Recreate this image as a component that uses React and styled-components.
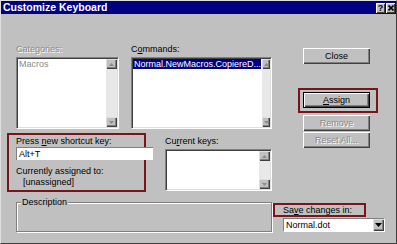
import styled, { createGlobalStyle } from "styled-components";

const GlobalStyle = createGlobalStyle`
    html, body {
        margin: 0;
        padding: 0;
        overflow: hidden;
        background: #c0c0c0;
    }
    body {
        font-family: "Liberation Sans", Arial, sans-serif;
        font-size: 9px;
    }
`;

const ScrollBar = () => (
    <ScrollTrack>
        <ScrollArrow>
            <svg width="5" height="3" viewBox="0 0 5 3">
                <polygon points="2.5,0 5,3 0,3" fill="#8a8a8a" />
            </svg>
        </ScrollArrow>
        <ScrollArrow>
            <svg width="5" height="3" viewBox="0 0 5 3">
                <polygon points="0,0 5,0 2.5,3" fill="#8a8a8a" />
            </svg>
        </ScrollArrow>
    </ScrollTrack>
);

const App = () => {
    return (
        <>
            <GlobalStyle />
            <Window>
                <TitleBar>
                    <TitleText>Customize Keyboard</TitleText>
                    <TitleButtons>
                        <TitleButton>?</TitleButton>
                        <TitleButton>
                            <svg width="6" height="6" viewBox="0 0 6 6">
                                <path d="M0.5 0.5 L5.5 5.5 M5.5 0.5 L0.5 5.5" stroke="#000" strokeWidth="1.6" />
                            </svg>
                        </TitleButton>
                    </TitleButtons>
                </TitleBar>
                <Body>
                    <TopArea>
                        <LeftPane>
                            <ListsRow>
                                <Field>
                                    <Label $disabled>Categories:</Label>
                                    <ListBox $height={72}>
                                        <ListItems>
                                            <Item $disabled>Macros</Item>
                                        </ListItems>
                                        <ScrollBar />
                                    </ListBox>
                                </Field>
                                <Field>
                                    <Label>
                                        C<u>o</u>mmands:
                                    </Label>
                                    <ListBox $height={72}>
                                        <ListItems>
                                            <Item $selected>Normal.NewMacros.CopiereD...</Item>
                                        </ListItems>
                                        <ScrollBar />
                                    </ListBox>
                                </Field>
                            </ListsRow>
                            <KeysRow>
                                <ShortcutFrame>
                                    <Label>
                                        Press <u>n</u>ew shortcut key:
                                    </Label>
                                    <KeyInput>Alt+T</KeyInput>
                                    <AssignedLabel>Currently assigned to:</AssignedLabel>
                                    <AssignedValue>[unassigned]</AssignedValue>
                                </ShortcutFrame>
                                <CurrentKeys>
                                    <Label>
                                        Cu<u>r</u>rent keys:
                                    </Label>
                                    <ListBox $height={42}>
                                        <ListItems />
                                        <ScrollBar />
                                    </ListBox>
                                </CurrentKeys>
                            </KeysRow>
                        </LeftPane>
                        <ButtonColumn>
                            <Button>Close</Button>
                            <AssignFrame>
                                <Button $default>
                                    <u>A</u>ssign
                                </Button>
                            </AssignFrame>
                            <Button $disabled>Remove</Button>
                            <Button $disabled $gap={1}>
                                Reset All...
                            </Button>
                        </ButtonColumn>
                    </TopArea>
                    <BottomArea>
                        <GroupBox>
                            <GroupLegend>Description</GroupLegend>
                        </GroupBox>
                        <SaveBlock>
                            <SaveFrame>
                                Sa<u>v</u>e changes in:
                            </SaveFrame>
                            <Dropdown>
                                <DropdownValue>Normal.dot</DropdownValue>
                                <DropdownButton>
                                    <svg width="7" height="4" viewBox="0 0 7 4">
                                        <polygon points="0,0 7,0 3.5,4" fill="#000" />
                                    </svg>
                                </DropdownButton>
                            </Dropdown>
                        </SaveBlock>
                    </BottomArea>
                </Body>
            </Window>
        </>
    );
};

const Window = styled.div`
    width: 397px;
    height: 244px;
    box-sizing: border-box;
    background: #c0c0c0;
    border-top: 1px solid #dfdfdf;
    border-left: 1px solid #dfdfdf;
    border-right: 1px solid #404040;
    border-bottom: 1px solid #404040;
    display: flex;
    flex-direction: column;
    overflow: hidden;
`;

const TitleBar = styled.div`
    height: 13px;
    background: #000080;
    display: flex;
    align-items: center;
    justify-content: space-between;
    padding: 0 1px 0 2px;
`;

const TitleText = styled.span`
    color: #fff;
    font-weight: bold;
    font-size: 10.5px;
    line-height: 13px;
`;

const TitleButtons = styled.div`
    display: flex;
    gap: 1px;
`;

const TitleButton = styled.div`
    width: 9px;
    height: 10px;
    background: #c0c0c0;
    box-shadow: inset 1px 1px #fff, inset -1px -1px #404040;
    display: flex;
    align-items: center;
    justify-content: center;
    font-weight: bold;
    font-size: 9px;
    line-height: 10px;
    color: #000;
`;

const Body = styled.div`
    flex: 1;
    display: flex;
    flex-direction: column;
    padding: 30px 0 0 15px;
`;

const TopArea = styled.div`
    display: flex;
    align-items: flex-start;
`;

const LeftPane = styled.div`
    width: 256px;
    display: flex;
    flex-direction: column;
`;

const ListsRow = styled.div`
    display: grid;
    grid-template-columns: 103px 141px;
    column-gap: 12px;
`;

const Field = styled.div`
    display: flex;
    flex-direction: column;
`;

const Label = styled.div`
    height: 11px;
    line-height: 11px;
    white-space: nowrap;
    color: ${(p) => (p.$disabled ? "#8a8a8a" : "#000")};
    text-shadow: ${(p) => (p.$disabled ? "1px 1px #fff" : "none")};
    margin-bottom: 2px;
`;

const ListBox = styled.div`
    height: ${(p) => p.$height}px;
    box-sizing: border-box;
    display: flex;
    background: #fff;
    border: 1px solid;
    border-color: #808080 #fff #fff #808080;
    padding: 1px;
    box-shadow: inset 1px 1px #404040, inset -1px -1px #dfdfdf;
`;

const ListItems = styled.div`
    flex: 1;
    display: flex;
    flex-direction: column;
    background: #fff;
`;

const Item = styled.div`
    height: 10px;
    line-height: 10px;
    padding-left: 1px;
    margin-right: 1px;
    white-space: nowrap;
    overflow: hidden;
    color: ${(p) => (p.$selected ? "#fff" : p.$disabled ? "#8a8a8a" : "#000")};
    background: ${(p) => (p.$selected ? "#000080" : "transparent")};
`;

const ScrollTrack = styled.div`
    width: 11px;
    display: flex;
    flex-direction: column;
    justify-content: space-between;
    background: #e8e8e8;
`;

const ScrollArrow = styled.div`
    height: 10px;
    background: #c0c0c0;
    box-shadow: inset 1px 1px #dfdfdf, inset -1px -1px #404040, inset -2px -2px #808080;
    display: flex;
    align-items: center;
    justify-content: center;
`;

const KeysRow = styled.div`
    display: flex;
    align-items: flex-start;
    margin-top: 4px;
`;

const ShortcutFrame = styled.div`
    width: 139px;
    height: 59px;
    box-sizing: border-box;
    margin-left: -9px;
    border: 2px solid #7a1418;
    padding: 1px 0 0 7px;
    display: flex;
    flex-direction: column;
`;

const KeyInput = styled.div`
    width: 137px;
    height: 13px;
    flex-shrink: 0;
    box-sizing: border-box;
    margin-top: -2px;
    background: #fff;
    border-top: 1px solid #808080;
    border-left: 1px solid #808080;
    padding-left: 2px;
    line-height: 12px;
    color: #000;
`;

const AssignedLabel = styled.div`
    margin-top: 6px;
    height: 11px;
    line-height: 11px;
    white-space: nowrap;
`;

const AssignedValue = styled.div`
    height: 11px;
    line-height: 11px;
    padding-left: 7px;
`;

const CurrentKeys = styled.div`
    width: 108px;
    margin-left: 19px;
    padding-top: 3px;
    display: flex;
    flex-direction: column;
`;

const ButtonColumn = styled.div`
    margin-left: 31px;
    padding-top: 4px;
    display: flex;
    flex-direction: column;
    align-items: flex-start;
`;

const Button = styled.div`
    width: 67px;
    height: 16px;
    box-sizing: border-box;
    margin-top: ${(p) => p.$gap || 0}px;
    display: flex;
    align-items: center;
    justify-content: center;
    background: #c0c0c0;
    border: ${(p) => (p.$default ? "1px solid #000" : "none")};
    box-shadow: inset 1px 1px #fff, inset -1px -1px #404040, inset -2px -2px #808080;
    color: ${(p) => (p.$disabled ? "#8a8a8a" : "#000")};
    text-shadow: ${(p) => (p.$disabled ? "1px 1px #fff" : "none")};
    line-height: 11px;
    white-space: nowrap;
`;

const AssignFrame = styled.div`
    margin: 24px 0 2px -5px;
    border: 2px solid #7a1418;
    padding: 2px 6px 3px 3px;
`;

const BottomArea = styled.div`
    display: flex;
    align-items: flex-start;
    margin-top: 10px;
`;

const GroupBox = styled.div`
    position: relative;
    width: 256px;
    height: 30px;
    box-sizing: border-box;
    border: 1px solid #808080;
    box-shadow: inset 1px 1px #fff, 1px 1px #fff;
`;

const GroupLegend = styled.span`
    position: absolute;
    top: -6px;
    left: 4px;
    padding: 0 1px;
    background: #c0c0c0;
    line-height: 11px;
`;

const SaveBlock = styled.div`
    margin-left: 1px;
    margin-top: 1px;
    display: flex;
    flex-direction: column;
`;

const SaveFrame = styled.div`
    width: 93px;
    height: 14px;
    box-sizing: border-box;
    border: 2px solid #7a1418;
    padding-left: 8px;
    line-height: 10px;
    white-space: nowrap;
`;

const Dropdown = styled.div`
    width: 102px;
    height: 14px;
    box-sizing: border-box;
    margin: 1px 0 0 10px;
    display: flex;
    background: #fff;
    border: 1px solid;
    border-color: #808080 #fff #fff #808080;
`;

const DropdownValue = styled.div`
    flex: 1;
    padding-left: 2px;
    line-height: 12px;
`;

const DropdownButton = styled.div`
    width: 11px;
    background: #c0c0c0;
    box-shadow: inset 1px 1px #dfdfdf, inset -1px -1px #404040, inset -2px -2px #808080;
    display: flex;
    align-items: center;
    justify-content: center;
`;

export default App;
